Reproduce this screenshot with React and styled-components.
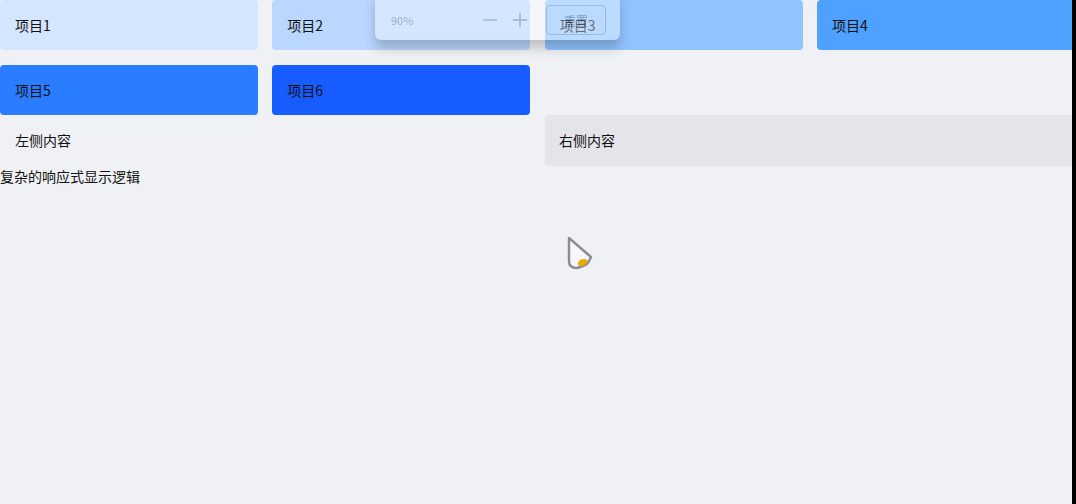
import React from 'react'
import styled, { createGlobalStyle } from 'styled-components'

const GlobalStyle = createGlobalStyle`
  html, body {
    margin: 0;
    padding: 0;
    background: #f0f1f5;
  }
  body {
    font-family: "Noto Sans CJK SC", "Noto Sans", sans-serif;
    font-size: 14px;
    color: #111;
  }
`

const Page = styled.div`
  width: 1076px;
  min-height: 504px;
`

const Grid = styled.div`
  display: grid;
  grid-template-columns: repeat(4, 258px);
  column-gap: 14.33px;
  row-gap: 15px;
`

const Item = styled.div`
  height: 50px;
  display: flex;
  align-items: center;
  padding: 0 15px 1px;
  box-sizing: border-box;
  border-radius: 4px;
  background: ${(p) => p.$bg};
  line-height: 20px;
`

const Split = styled.div`
  display: grid;
  grid-template-columns: 530.67px 1fr;
  column-gap: 14.33px;
`

const Side = styled.div`
  height: 51px;
  display: flex;
  align-items: center;
  padding: 0 15px 1px ${(p) => (p.$right ? '14px' : '15px')};
  box-sizing: border-box;
  background: ${(p) => (p.$right ? '#e4e5e9' : 'transparent')};
  border-radius: 4px 0 0 4px;
  line-height: 20px;
`

const Caption = styled.div`
  line-height: 20px;
  margin-top: 0;
`

const Toolbar = styled.div`
  position: fixed;
  left: 375px;
  top: -8px;
  width: 245px;
  height: 48px;
  box-sizing: border-box;
  padding: 8px 14px 0 16px;
  display: flex;
  align-items: center;
  background: #fff;
  border-radius: 6px;
  box-shadow: 0 8px 12px rgba(0, 0, 0, 0.55);
  opacity: 0.38;
`

const Zoom = styled.span`
  font-size: 11px;
  color: #666;
  flex: 1;
`

const IconButton = styled.span`
  width: 16px;
  height: 16px;
  margin-right: 14px;
  display: flex;
  align-items: center;
  justify-content: center;
  color: #777;
`

const ResetButton = styled.span`
  margin-left: 4px;
  width: 60px;
  height: 30px;
  box-sizing: border-box;
  display: flex;
  align-items: center;
  justify-content: center;
  border: 1px solid #9ab;
  border-radius: 4px;
  font-size: 12px;
  color: #555;
`

const EdgeBar = styled.div`
  position: fixed;
  top: 0;
  right: 0;
  width: 4px;
  height: 100%;
  background: #000;
`

const Cursor = styled.svg`
  position: fixed;
  left: 562px;
  top: 232px;
`

const items = [
  { label: '项目1', bg: '#d6e5fe' },
  { label: '项目2', bg: '#bad7ff' },
  { label: '项目3', bg: '#91c3ff' },
  { label: '项目4', bg: '#4ea1fe' },
  { label: '项目5', bg: '#2a7dff' },
  { label: '项目6', bg: '#165cfe' },
]

const App = () => (
  <Page>
    <GlobalStyle />
    <Grid>
      {items.map((it) => (
        <Item key={it.label} $bg={it.bg}>
          {it.label}
        </Item>
      ))}
    </Grid>
    <Split>
      <Side>左侧内容</Side>
      <Side $right>右侧内容</Side>
    </Split>
    <Caption>复杂的响应式显示逻辑</Caption>

    <Toolbar>
      <Zoom>90%</Zoom>
      <IconButton>
        <svg width="16" height="16" viewBox="0 0 16 16">
          <path d="M1 8h14" stroke="currentColor" strokeWidth="1.4" />
        </svg>
      </IconButton>
      <IconButton>
        <svg width="16" height="16" viewBox="0 0 16 16">
          <path d="M1 8h14M8 1v14" stroke="currentColor" strokeWidth="1.4" />
        </svg>
      </IconButton>
      <ResetButton>重置</ResetButton>
    </Toolbar>

    <Cursor width="34" height="40" viewBox="0 0 34 40">
      <path
        d="M7 6 L7 29 Q7 36 15 36 L21 34 Q25 33 27 29 L29 25 Z"
        fill="#f7f7f9"
        stroke="#8c8c8c"
        strokeWidth="2.4"
        strokeLinejoin="round"
      />
      <ellipse cx="20.5" cy="30.5" rx="5" ry="3.2" transform="rotate(-25 20.5 30.5)" fill="#f0a800" />
    </Cursor>
    <EdgeBar />
  </Page>
)

export default App
